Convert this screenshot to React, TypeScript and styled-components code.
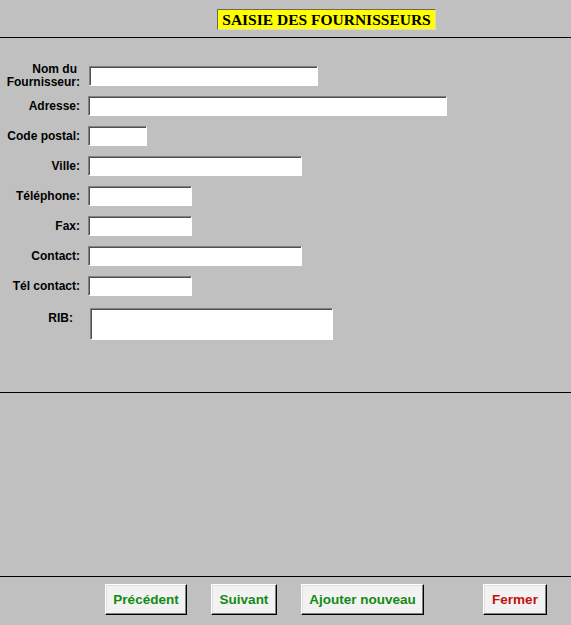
import React from 'react';
import styled, { createGlobalStyle } from 'styled-components';

const GlobalStyle = createGlobalStyle`
  html, body {
    margin: 0;
    padding: 0;
    background: #c0c0c0;
  }
  body {
    font-family: 'Liberation Sans', Arial, sans-serif;
  }
`;

const Page = styled.div`
  width: 571px;
  height: 625px;
  background: #c0c0c0;
  display: flex;
  flex-direction: column;
  overflow: hidden;
`;

const Header = styled.header`
  height: 38px;
  flex-shrink: 0;
  box-sizing: border-box;
  padding: 9px 0 0 217px;
  border-bottom: 1px solid #000;
`;

const Title = styled.h1`
  margin: 0;
  width: 219px;
  height: 21px;
  box-sizing: border-box;
  background: #ffff00;
  border: 1px solid #6a6a50;
  border-right-color: #d8d8d8;
  border-bottom-color: #d8d8d8;
  font-family: 'Liberation Serif', 'Times New Roman', serif;
  font-weight: 700;
  font-size: 15.5px;
  line-height: 19px;
  color: #000;
  text-align: center;
  white-space: nowrap;
`;

const FormSection = styled.section`
  height: 355px;
  flex-shrink: 0;
  box-sizing: border-box;
  padding-top: 28px;
  border-bottom: 1px solid #000;
  display: flex;
  flex-direction: column;
  gap: 10px;
`;

const Row = styled.div<{ $tall?: boolean }>`
  display: flex;
  height: ${({ $tall }) => ($tall ? 'auto' : '20px')};
  align-items: ${({ $tall }) => ($tall ? 'flex-start' : 'center')};
  gap: ${({ $tall }) => ($tall ? '17px' : '8px')};
  margin-top: ${({ $tall }) => ($tall ? '2px' : '0')};
`;

const Label = styled.label<{ $tall?: boolean }>`
  width: ${({ $tall }) => ($tall ? '73px' : '80px')};
  flex-shrink: 0;
  padding-top: ${({ $tall }) => ($tall ? '4px' : '0')};
  text-align: right;
  font-size: 12px;
  font-weight: 700;
  line-height: 13px;
  color: #000;
`;

const NameLabel = styled(Label)`
  display: flex;
  flex-direction: column;
  align-items: flex-end;
  span:first-child {
    padding-right: 3px;
  }
`;

const Field = styled.input<{ $w: number; $h?: number }>`
  width: ${({ $w }) => $w}px;
  height: ${({ $h }) => $h ?? 20}px;
  box-sizing: border-box;
  margin: 0;
  padding: 0 3px;
  background: #fff;
  border: 1px solid;
  border-color: #808080 #fff #fff #808080;
  box-shadow: inset 1px 1px 0 #505050;
  font-family: 'Liberation Sans', Arial, sans-serif;
  font-size: 12px;
  outline: none;
  resize: none;
`;

const Spacer = styled.div`
  height: 184px;
  flex-shrink: 0;
  box-sizing: border-box;
  border-bottom: 1px solid #000;
`;

const Footer = styled.footer`
  display: flex;
  padding: 7px 0 0 105px;
`;

const Button = styled.button<{ $w: number; $gap: number; $danger?: boolean }>`
  width: ${({ $w }) => $w}px;
  height: 31px;
  margin-right: ${({ $gap }) => $gap}px;
  box-sizing: border-box;
  padding: 0;
  background: #f2f2f2;
  border: 1px solid;
  border-color: #fff #000 #000 #fff;
  box-shadow: inset -1px -1px 0 #808080, inset 1px 1px 0 #e0e0e0;
  font-family: 'Liberation Sans', Arial, sans-serif;
  font-size: 13.5px;
  font-weight: 700;
  color: ${({ $danger }) => ($danger ? '#c41010' : '#138a13')};
  cursor: pointer;
`;

const fields = [
  { label: 'Adresse:', w: 359 },
  { label: 'Code postal:', w: 59 },
  { label: 'Ville:', w: 214 },
  { label: 'Téléphone:', w: 104 },
  { label: 'Fax:', w: 104 },
  { label: 'Contact:', w: 214 },
  { label: 'Tél contact:', w: 104 },
];

const buttons = [
  { text: 'Précédent', w: 82, gap: 24 },
  { text: 'Suivant', w: 66, gap: 24 },
  { text: 'Ajouter nouveau', w: 123, gap: 59 },
  { text: 'Fermer', w: 64, gap: 0, danger: true },
];

const App: React.FC = () => (
  <>
    <GlobalStyle />
    <Page>
      <Header>
        <Title>SAISIE DES FOURNISSEURS</Title>
      </Header>
      <FormSection>
        <Row>
          <NameLabel>
            <span>Nom du</span>
            <span>Fournisseur:</span>
          </NameLabel>
          <Field $w={229} style={{ marginLeft: 1 }} />
        </Row>
        {fields.map(f => (
          <Row key={f.label}>
            <Label>{f.label}</Label>
            <Field $w={f.w} />
          </Row>
        ))}
        <Row $tall>
          <Label $tall>RIB:</Label>
          <Field as="textarea" $w={243} $h={32} />
        </Row>
      </FormSection>
      <Spacer />
      <Footer>
        {buttons.map(b => (
          <Button key={b.text} $w={b.w} $gap={b.gap} $danger={b.danger}>
            {b.text}
          </Button>
        ))}
      </Footer>
    </Page>
  </>
);

export default App;
